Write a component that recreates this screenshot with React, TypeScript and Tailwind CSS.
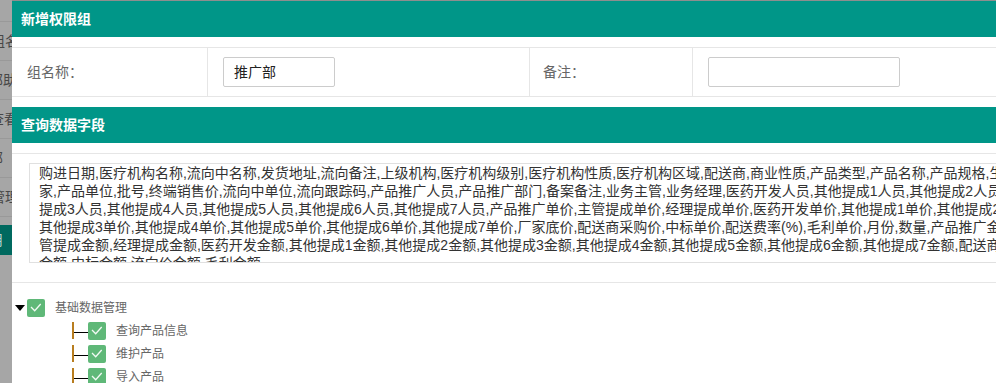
import React from "react";

const FONT = "font-['Liberation_Sans','Noto_Sans_CJK_SC',sans-serif]";

const lines = [
  "购进日期,医疗机构名称,流向中名称,发货地址,流向备注,上级机构,医疗机构级别,医疗机构性质,医疗机构区域,配送商,商业性质,产品类型,产品名称,产品规格,生产厂",
  "家,产品单位,批号,终端销售价,流向中单位,流向跟踪码,产品推广人员,产品推广部门,备案备注,业务主管,业务经理,医药开发人员,其他提成1人员,其他提成2人员,其他",
  "提成3人员,其他提成4人员,其他提成5人员,其他提成6人员,其他提成7人员,产品推广单价,主管提成单价,经理提成单价,医药开发单价,其他提成1单价,其他提成2单价,",
  "其他提成3单价,其他提成4单价,其他提成5单价,其他提成6单价,其他提成7单价,厂家底价,配送商采购价,中标单价,配送费率(%),毛利单价,月份,数量,产品推广金额,主",
  "管提成金额,经理提成金额,医药开发金额,其他提成1金额,其他提成2金额,其他提成3金额,其他提成4金额,其他提成5金额,其他提成6金额,其他提成7金额,配送商采购价",
  "金额,中标金额,流向价金额,毛利金额",
];

function Check() {
  return (
    <div className="w-[18px] h-[18px] shrink-0 rounded-[2px] bg-[#5FB878] flex items-center justify-center">
      <svg width="18" height="18" viewBox="0 0 18 18">
        <path d="M4 8 L7.7 11.7 L13.7 5" fill="none" stroke="#ffffff" strokeWidth="1.3" strokeOpacity="0.92" />
      </svg>
    </div>
  );
}

function Child({ label }: { label: string }) {
  return (
    <div className="h-[23px] flex items-center pl-[60px]">
      <div className="w-[2px] h-[17px] bg-[#b87d1f]" />
      <div className="w-[14px] h-px bg-black mt-[4px]" />
      <Check />
      <span className="ml-[10px] text-[12px] text-[#666]">{label}</span>
    </div>
  );
}

function LeftStrip() {
  const rows = [
    { t: "组名", ml: "ml-[-9px]" },
    { t: "部助", ml: "ml-[-11px]" },
    { t: "查看", ml: "ml-[-10px]" },
    { t: "部", ml: "ml-[-11px]" },
    { t: "管理", ml: "ml-[-9px]" },
  ];
  return (
    <div className="w-[12px] h-[383px] shrink-0 overflow-hidden flex flex-col bg-[#a6a6a6]">
      <div className="h-[22px] shrink-0 border-b border-[#999999]" />
      {rows.map((r) => (
        <div key={r.t} className="h-[39px] shrink-0 border-b border-[#999999] flex items-center">
          <span className={`${r.ml} whitespace-nowrap text-[14px] text-[#474747]`}>{r.t}</span>
        </div>
      ))}
      <div className="h-[8px] shrink-0" />
      <div className="h-[30px] shrink-0 bg-[#00695f] flex items-center">
        <span className="ml-[-11px] whitespace-nowrap text-[14px] text-[#b9d5d2]">用</span>
      </div>
    </div>
  );
}

export default function App() {
  return (
    <div className={`w-[996px] h-[383px] overflow-hidden flex bg-[#8e8e8e] ${FONT}`}>
      <LeftStrip />
      <div className="w-[1150px] shrink-0 mt-[1px] bg-white flex flex-col">
        <div className="h-[36px] shrink-0 bg-[#009688] flex items-center pl-[9px] text-white font-bold text-[14px]">
          新增权限组
        </div>
        <div className="mt-[10px] h-[50px] shrink-0 flex border-y border-[#e6e6e6]">
          <div className="w-[196px] border-r border-[#e6e6e6] pl-[15px] flex items-center text-[14px] text-[#666]">
            组名称：
          </div>
          <div className="w-[322px] border-r border-[#e6e6e6] pl-[15px] flex items-center">
            <div className="w-[112px] h-[30px] border border-[#cccccc] rounded-[2px] pl-[10px] flex items-center text-[14px] text-[#222]">
              推广部
            </div>
          </div>
          <div className="w-[163px] border-r border-[#e6e6e6] pl-[13px] flex items-center text-[14px] text-[#666]">
            备注：
          </div>
          <div className="flex-1 pl-[15px] flex items-center">
            <div className="w-[192px] h-[30px] border border-[#cccccc] rounded-[2px]" />
          </div>
        </div>
        <div className="mt-[10px] h-[36px] shrink-0 bg-[#009688] flex items-center pl-[9px] text-white font-bold text-[14px]">
          查询数据字段
        </div>
        <div className="mt-[10px] shrink-0 border-y border-[#e6e6e6] pt-[9px] pb-[19px]">
          <div className="ml-[17px] w-[1100px] h-[100px] border border-[#e0e0e0] overflow-hidden pl-[9px] text-[14px] leading-[18px] text-[#333]">
            {lines.map((l, i) => (
              <div key={i} className="whitespace-nowrap">
                {l}
              </div>
            ))}
          </div>
        </div>
        <div className="pt-[13px] flex flex-col">
          <div className="h-[23px] flex items-center pl-[3px]">
            <div className="w-0 h-0 border-l-[5.5px] border-r-[5.5px] border-t-[6px] border-l-transparent border-r-transparent border-t-black" />
            <div className="ml-[2px]">
              <Check />
            </div>
            <span className="ml-[10px] text-[12px] text-[#666]">基础数据管理</span>
          </div>
          <Child label="查询产品信息" />
          <Child label="维护产品" />
          <Child label="导入产品" />
        </div>
      </div>
    </div>
  );
}
